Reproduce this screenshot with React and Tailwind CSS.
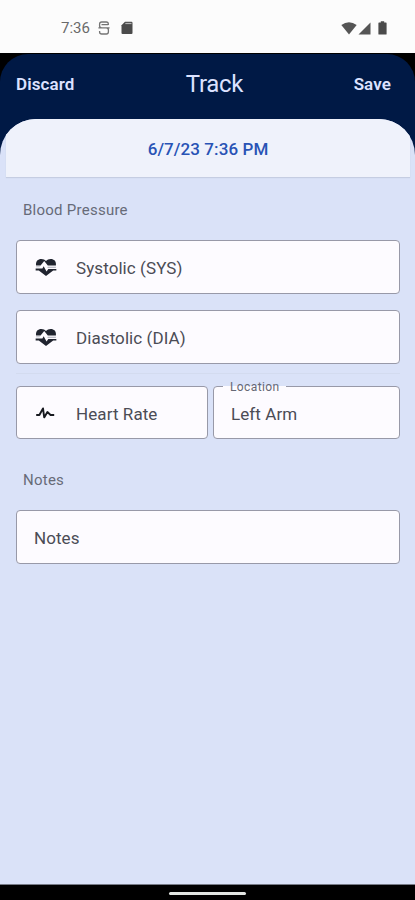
const HeartPulseIcon = () => (
  <svg viewBox="0 0 24 20" className="w-[22px] h-[18px] fill-[#20242f]">
    <path d="M1 8.2C0.3 3.4 3.2 1 6.7 1C9 1 10.8 1.8 12 3.4C13.2 1.8 15 1 17.3 1C20.8 1 23.7 3.4 23 8.2L14 8.2L10 3.2L6 8.2Z" />
    <path d="M14 9.6H23V10.8H13.4ZM1 9.4H5.6L4.8 10.4H1Z" className="fill-[#a9abb6]" />
    <path d="M0.5 11.6H8L9.4 9.2L12.6 15L14.6 12.2H23.5V13.8H20L12 20L4 13.8H0.5Z" />
  </svg>
);

const PulseIcon = () => (
  <svg viewBox="0 0 20 14" className="w-5 h-3.5" fill="none" stroke="#17191f" strokeWidth="1.9" strokeLinejoin="round">
    <path d="M1.2 9H4.4L8 2.4L9.2 11.4L12.4 6L15.6 9H19.2" />
  </svg>
);

const StatusBar = () => (
  <div className="flex h-[53px] shrink-0 items-center bg-[#fcfcfc] pl-[61px] pr-[28px] pt-[3px] text-[#6a6a6a]">
    <span className="text-[15px] leading-none">7:36</span>
    <svg viewBox="0 0 12 14" className="ml-[8px] h-3.5 w-3" fill="none" stroke="#747474" strokeWidth="1.3">
      <path d="M10.3 4V3Q10.3 1 8.3 1H3.7Q1.6 1 1.6 3V5Q1.6 6.8 3.7 6.8H8.3Q10.4 6.8 10.4 9V10.8Q10.4 13 8.3 13H3.7Q1.6 13 1.6 11V10M0.4 6.8H11.6M3.5 3.6H10.3" />
    </svg>
    <svg viewBox="0 0 12 14" className="ml-[11px] h-3.5 w-3">
      <path d="M4 .8H10.5Q11.5.8 11.5 2V12Q11.5 13 10.5 13H1.5Q.5 13 .5 12V4.2Z" fill="#4b4b4b" />
      <path d="M4.3 2.5H10.5" stroke="#b5b5b5" strokeWidth="1.2" />
    </svg>
    <div className="ml-auto flex items-center">
      <svg viewBox="0 0 16 13" className="h-[13px] w-4 fill-[#555]">
        <path d="M0.3 3Q8-2.3 15.7 3L8 12.6Z" />
      </svg>
      <svg viewBox="0 0 13 13" className="ml-[1px] h-[13px] w-[13px] fill-[#555]">
        <path d="M12.5 0.5V12.5H0.5Z" />
      </svg>
      <svg viewBox="0 0 9 14" className="ml-[7px] h-3.5 w-[9px] fill-[#4b4b4b]">
        <path d="M2.8 0.3H6.2V1.6H8Q8.6 1.6 8.6 2.2V13Q8.6 13.6 8 13.6H1Q.4 13.6.4 13V2.2Q.4 1.6 1 1.6H2.8Z" />
      </svg>
    </div>
  </div>
);

const Field = ({ icon, label, className = "h-[53px]" }) => (
  <div className={`flex items-center rounded-[4px] border border-[#9899a8] bg-[#fdfbff] ${className}`}>
    {icon && <span className="ml-[18px] flex w-[41px]">{icon}</span>}
    <span className={`pt-[3px] text-[17px] leading-none tracking-[0.08px] text-[#4b4c55] ${icon ? "" : "pl-[17px]"}`}>{label}</span>
  </div>
);

const App = () => {
  return (
    <div className="flex h-[900px] w-[415px] flex-col overflow-hidden bg-black font-['Roboto',sans-serif]">
      <StatusBar />
      <div className="mt-px flex min-h-0 flex-1 flex-col rounded-t-[28px] bg-[#001945]">
        <header className="flex h-[65px] shrink-0 items-center justify-between pb-[3px] pl-4 pr-6 text-[#dce2ff]">
          <span className="w-[80px] -translate-y-px text-[17px] leading-none font-semibold tracking-[0.1px]">Discard</span>
          <span className="ml-[14px] text-[24px] leading-none tracking-[-0.3px] translate-x-[4px] -translate-y-px">Track</span>
          <span className="w-[80px] -translate-y-px text-right text-[17px] leading-none font-semibold tracking-[0.1px]">Save</span>
        </header>
        <main className="flex-1 overflow-hidden rounded-t-[36px] bg-[#dae2f8]">
          <div className="ml-[6px] mr-[5px] flex h-[58px] items-center justify-center bg-[#eff2fb] pt-[3px] text-[17px] font-medium tracking-[0.08px] text-[#2853b5] shadow-[0_1px_1px_#c5cde2]">
            6/7/23 7:36 PM
          </div>
          <div className="pl-4 pr-[15px]">
            <h2 className="pt-[26px] pl-[7px] text-[15px] leading-[15px] tracking-[0.25px] text-[#676b78]">Blood Pressure</h2>
            <Field className="mt-[22px] h-[54px]" icon={<HeartPulseIcon />} label="Systolic (SYS)" />
            <Field className="mt-[16px] h-[54px]" icon={<HeartPulseIcon />} label="Diastolic (DIA)" />
            <div className="mt-[9px] h-px bg-[#d3dbef]" />
            <div className="mt-[12px] grid grid-cols-[192px_1fr] gap-[5px]">
              <Field icon={<PulseIcon />} label="Heart Rate" />
              <div className="relative">
                <Field label="Left Arm" />
                <span className="absolute top-0 left-[10px] h-px w-[63px] bg-[#fdfbff]" />
                <span className="absolute top-[-5px] left-[17px] text-[12px] leading-[12px] tracking-[0.4px] text-[#666875]">Location</span>
              </div>
            </div>
            <h2 className="pt-[34px] pl-[7px] text-[15px] leading-[15px] tracking-[0.25px] text-[#676b78]">Notes</h2>
            <Field className="mt-[22px] h-[54px]" label="Notes" />
          </div>
        </main>
      </div>
      <div className="flex h-[16px] shrink-0 justify-center border-t border-[#777b87] bg-black pt-[7px]">
        <div className="h-[3px] w-[77px] rounded-full bg-[#e3e6e3]" />
      </div>
    </div>
  );
};

export default App;
